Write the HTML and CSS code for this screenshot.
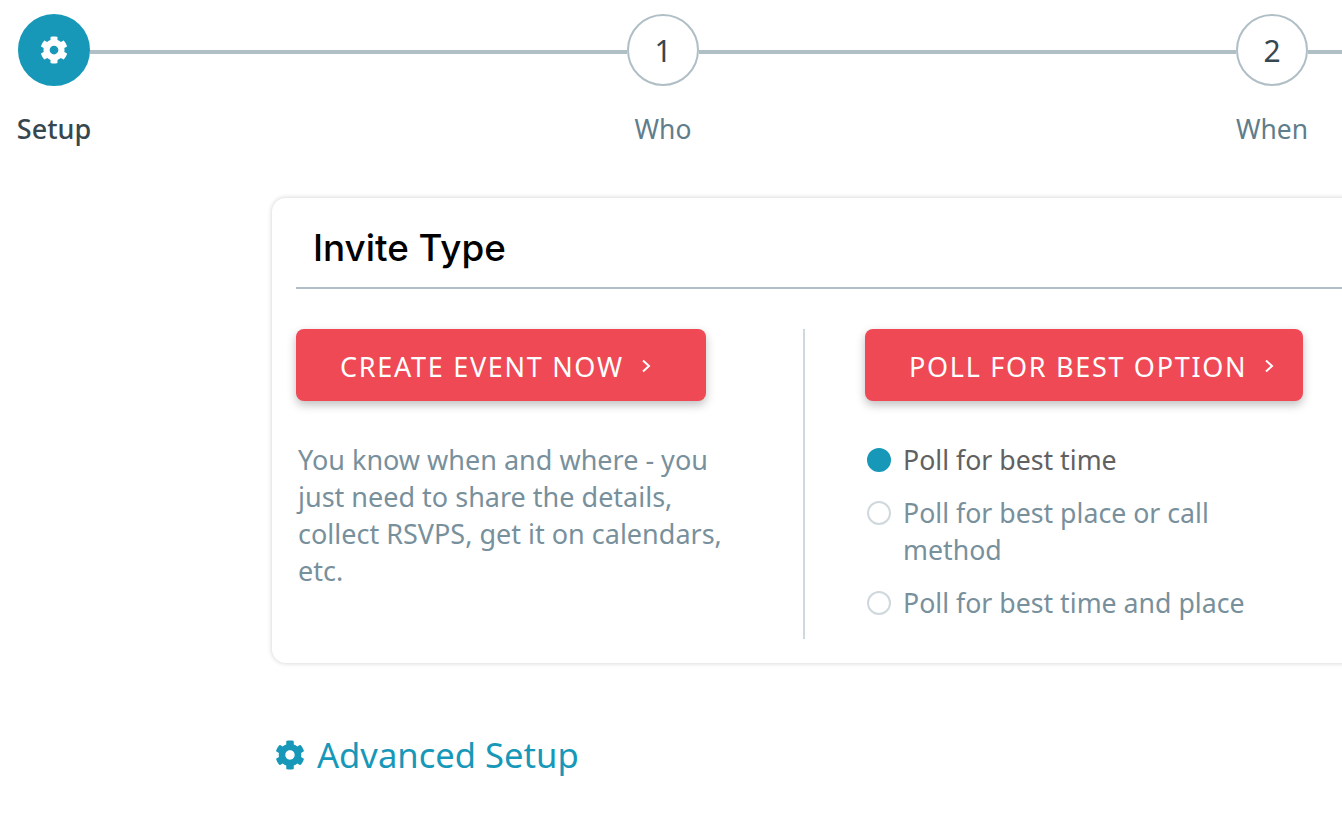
FILE: index.html
```html
<!DOCTYPE html>
<html lang="en">
<head>
    <meta charset="UTF-8">
    <title>Invite Setup</title>
    <link rel="stylesheet" href="styles.css">
</head>
<body>
    <svg class="defs" width="0" height="0">
        <symbol id="cog" viewBox="0 0 512 512">
            <path d="M487.4 315.7l-42.6-24.6c4.3-23.2 4.3-47 0-70.2l42.6-24.6c4.9-2.8 7.1-8.6 5.5-14-11.1-35.6-30-67.8-54.7-94.6-3.8-4.1-10-5.1-14.8-2.3L380.8 110c-17.9-15.4-38.5-27.3-60.8-35.1V25.8c0-5.6-3.9-10.5-9.4-11.7-36.7-8.2-74.3-7.8-109.2 0-5.5 1.2-9.4 6.1-9.4 11.7V75c-22.2 7.9-42.8 19.8-60.8 35.1L88.7 85.5c-4.9-2.8-11-1.9-14.8 2.3-24.7 26.7-43.6 58.9-54.7 94.6-1.7 5.4.6 11.2 5.5 14L67.3 221c-4.3 23.2-4.3 47 0 70.2l-42.6 24.6c-4.9 2.8-7.1 8.6-5.5 14 11.1 35.6 30 67.8 54.7 94.6 3.8 4.1 10 5.1 14.8 2.3l42.6-24.6c17.9 15.4 38.5 27.3 60.8 35.1v49.2c0 5.6 3.9 10.5 9.4 11.7 36.7 8.2 74.3 7.8 109.2 0 5.5-1.2 9.4-6.1 9.4-11.7v-49.2c22.2-7.9 42.8-19.8 60.8-35.1l42.6 24.6c4.9 2.8 11 1.9 14.8-2.3 24.7-26.7 43.6-58.9 54.7-94.6 1.5-5.5-.7-11.3-5.6-14.1zM256 336c-44.1 0-80-35.9-80-80s35.9-80 80-80 80 35.9 80 80-35.9 80-80 80z"/>
        </symbol>
        <symbol id="chevron" viewBox="0 0 10 14">
            <path d="M2 1.5 L8 7 L2 12.5" fill="none" stroke="currentColor" stroke-width="2"/>
        </symbol>
    </svg>

    <!-- Steps -->
    <div class="stepper">
        <div class="step active">
            <div class="step-head">
                <div class="step-circle"><svg class="step-cog"><use href="#cog"/></svg></div>
                <div class="step-line"></div>
            </div>
            <div class="step-label"><span>Setup</span></div>
        </div>
        <div class="step">
            <div class="step-head">
                <div class="step-circle">1</div>
                <div class="step-line"></div>
            </div>
            <div class="step-label"><span>Who</span></div>
        </div>
        <div class="step">
            <div class="step-head">
                <div class="step-circle">2</div>
                <div class="step-line"></div>
            </div>
            <div class="step-label"><span>When</span></div>
        </div>
    </div>

    <!-- Invite type card -->
    <div class="content">
        <div class="card">
            <h2 class="card-title">Invite Type</h2>
            <div class="card-body">
                <div class="col col-left">
                    <button class="btn btn-event" type="button">CREATE EVENT NOW<svg class="chevron"><use href="#chevron"/></svg></button>
                    <p class="col-text">You know when and where - you just need to share the details, collect RSVPS, get it on calendars, etc.</p>
                </div>
                <div class="col col-right">
                    <button class="btn btn-poll" type="button">POLL FOR BEST OPTION<svg class="chevron"><use href="#chevron"/></svg></button>
                    <ul class="poll-options">
                        <li class="poll-option selected"><span class="radio"></span><span>Poll for best time</span></li>
                        <li class="poll-option"><span class="radio"></span><span>Poll for best place or call method</span></li>
                        <li class="poll-option"><span class="radio"></span><span>Poll for best time and place</span></li>
                    </ul>
                </div>
            </div>
        </div>

        <a class="advanced" href="#"><svg class="advanced-cog"><use href="#cog"/></svg>Advanced Setup</a>
    </div>
</body>
</html>
```

FILE: styles.css
```css
html, body {
    height: 100%;
}
body {
    margin: 0;
    overflow: hidden;
    background: #fff;
    font-family: "Noto Sans", "Open Sans", sans-serif;
    color: #78909c;
}
.defs { display: block; height: 0; }

/* Steps */
.stepper {
    display: flex;
    width: 1324px;
    padding: 14px 0 0 18px;
    overflow: hidden;
}
.step {
    flex: none;
    width: 609px;
}
.step-head {
    display: flex;
    align-items: center;
}
.step-circle {
    flex: none;
    width: 72px;
    height: 72px;
    box-sizing: border-box;
    border: 2px solid #b0bec5;
    border-radius: 50%;
    display: flex;
    justify-content: center;
    align-items: center;
    font-size: 30px;
    color: #37474f;
}
.step-line {
    flex: 1;
    height: 4px;
    margin-top: 4px;
    background: #b0bec5;
}
.step.active .step-circle {
    background: #1798b8;
    border-color: #1798b8;
}
.step-cog {
    width: 28px;
    height: 28px;
    fill: #fff;
}
.step-label {
    width: 72px;
    display: flex;
    justify-content: center;
    margin-top: 25px;
    font-size: 26.4px;
    line-height: 36px;
    white-space: nowrap;
    color: #607d8b;
}
.step.active .step-label {
    color: #37474f;
    font-size: 27px;
    font-weight: 500;
}

/* Card */
.content {
    width: 1080px;
    box-sizing: border-box;
    margin: 41px 0 0 262px;
    padding: 10px 0 0 10px;
    overflow: hidden;
}
.card {
    width: 1400px;
    box-sizing: border-box;
    background: #fff;
    border-radius: 14px;
    box-shadow: 0 0 5px rgba(0, 0, 0, 0.2);
    padding: 0 0 24px 24px;
    margin-bottom: 68px;
}
.card-title {
    margin: 0;
    padding: 24px 0 13px 17px;
    border-bottom: 2px solid #b0bec5;
    font-family: Inter, sans-serif;
    font-size: 36.8px;
    line-height: 52px;
    font-weight: 500;
    color: #000;
}
.card-body {
    display: flex;
    margin-top: 40px;
}
.col-left {
    width: 509px;
    box-sizing: border-box;
    border-right: 2px solid #cfd8dc;
    height: 310px;
}
.col-right {
    padding-left: 60px;
}
.btn {
    display: flex;
    align-items: center;
    height: 72px;
    padding: 2px 0 0 44px;
    border: none;
    border-radius: 8px;
    background: #ef4955;
    color: #fff;
    font-family: inherit;
    font-size: 27px;
    letter-spacing: 1.7px;
    box-shadow: 0 4px 10px rgba(0, 0, 0, 0.25);
}
.btn-event { width: 410px; }
.btn-poll { width: 438px; }
.chevron {
    width: 10px;
    height: 14px;
    margin-left: 17px;
}
.col-text {
    width: 440px;
    margin: 40px 0 0 2px;
    font-size: 27px;
    line-height: 37px;
}
.poll-options {
    list-style: none;
    margin: 40px 0 0;
    padding: 0;
    width: 400px;
}
.poll-option {
    display: flex;
    gap: 12px;
    margin-bottom: 16px;
    margin-left: 2px;
    font-size: 26.7px;
    line-height: 37px;
}
.poll-option.selected {
    color: #616161;
}
.radio {
    flex: none;
    width: 24px;
    height: 24px;
    box-sizing: border-box;
    margin-top: 7px;
    border: 2px solid #cfd8dc;
    border-radius: 50%;
}
.selected .radio {
    background: #1798b8;
    border-color: #1798b8;
}

.advanced {
    display: inline-flex;
    align-items: center;
    gap: 12px;
    margin-left: 3px;
    font-size: 34.6px;
    line-height: 48px;
    color: #1798b8;
    text-decoration: none;
}
.advanced-cog {
    width: 30px;
    height: 30px;
    fill: #1798b8;
}
```
